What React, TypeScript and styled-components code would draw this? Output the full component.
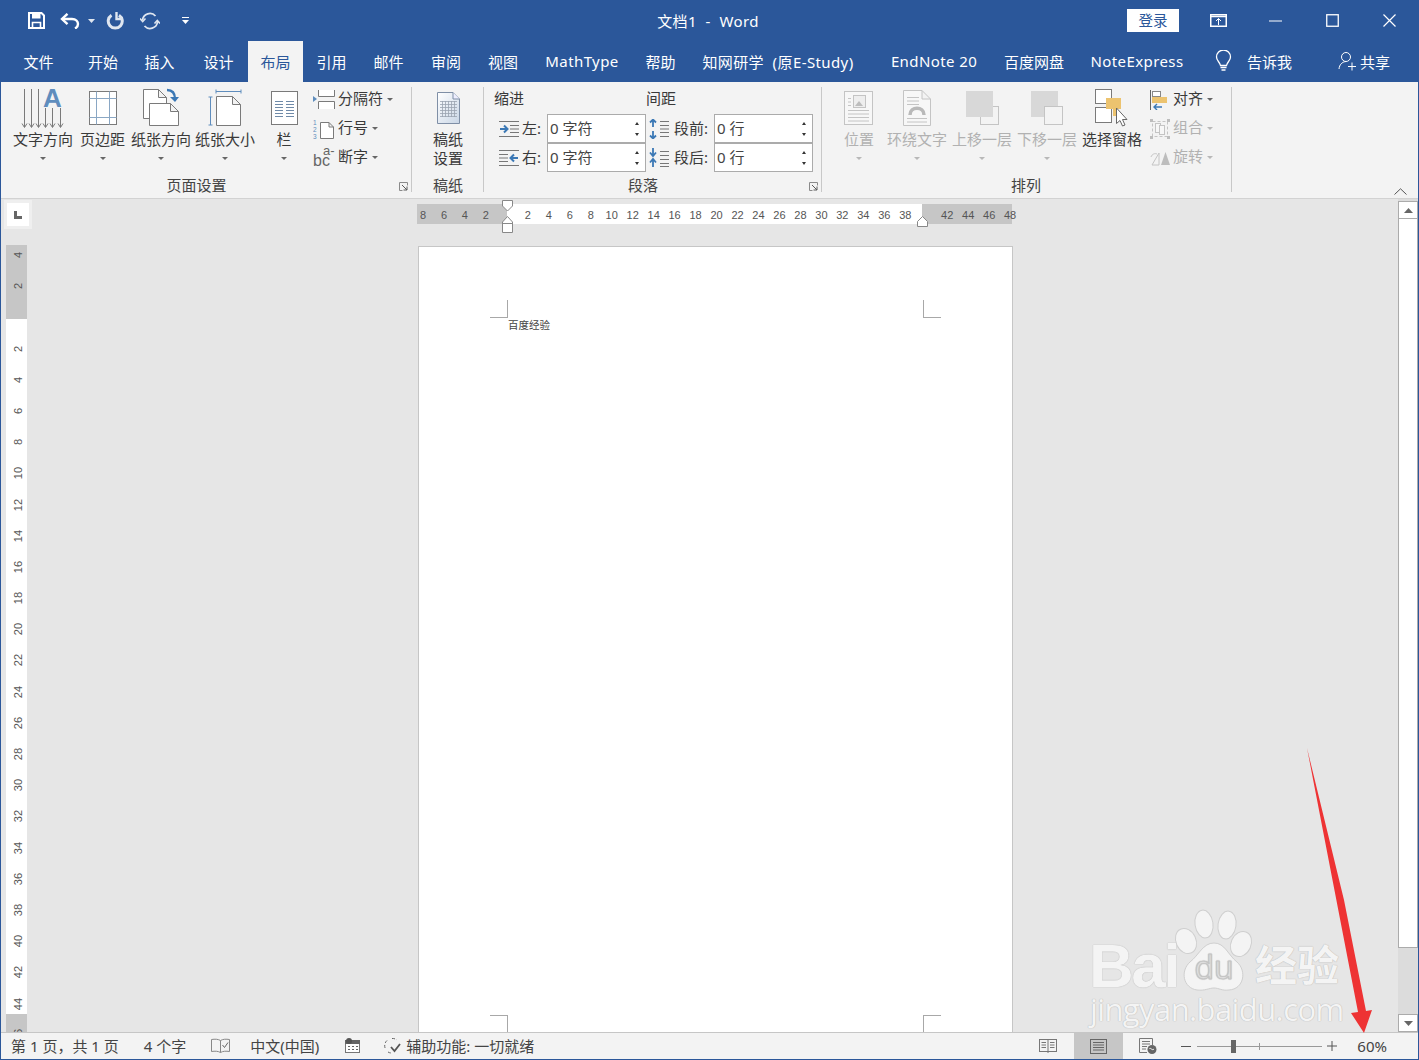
import React from "react";
import styled, { createGlobalStyle } from "styled-components";

const FONT = `"Noto Sans", "Noto Sans CJK SC", sans-serif`;
const BLUE = "#2b579a";

const Global = createGlobalStyle`
  html, body { margin: 0; padding: 0; background: #e6e6e6; overflow: hidden; }
  * { box-sizing: border-box; }
`;

const Win = styled.div`
  position: relative; width: 1419px; height: 1060px; overflow: hidden;
  display: flex; flex-direction: column; border: 1px solid ${BLUE}; border-top: 0;
  font-family: ${FONT}; color: #333; background: #e6e6e6;
`;
const TitleBar = styled.div`
  height: 41px; background: ${BLUE}; color: #fff; display: grid;
  grid-template-columns: 1fr auto 1fr; align-items: center;
`;
const Qat = styled.div`display: flex; align-items: center; padding-left: 25px;`;
const QatSlot = styled.span<{ $w: number; $ml?: number }>`
  width: ${p => p.$w}px; margin-left: ${p => p.$ml ?? 0}px; display: flex; justify-content: center; align-items: center;
`;
const DocTitle = styled.div`font-size: 15px; letter-spacing: 0.4px; white-space: pre; padding: 0 3px 1px 0;`;
const WinControls = styled.div`display: flex; justify-content: flex-end; align-items: center;`;
const Login = styled.button`
  width: 52px; height: 23px; border: 0; padding: 0 0 2px; background: #fff; color: #2b579a; margin-right: 11px;
  font: 14.5px ${FONT}; display: flex; align-items: center; justify-content: center;
`;
const WinBtn = styled.span`width: 57px; height: 41px; display: flex; align-items: center; justify-content: center;`;

const TabBar = styled.div`height: 41px; background: ${BLUE}; display: flex; margin-right: -1px;`;
const Tab = styled.div<{ $w: number; $active?: boolean; $latin?: boolean }>`
  width: ${p => p.$w}px; flex: none; display: flex; align-items: center; justify-content: center; padding-bottom: 1px;
  font-size: 15px; white-space: pre; letter-spacing: ${p => (p.$latin ? 0.4 : 0)}px; color: ${p => (p.$active ? "#2b579a" : "#fff")};
  background: ${p => (p.$active ? "#f3f3f3" : "transparent")};
`;
const Tell = styled.div`margin-left: 9px; display: flex; align-items: center; color: #fff; font-size: 15px; gap: 15px; padding-bottom: 1px;`;
const Share = styled.div`margin-left: 46px; display: flex; align-items: center; color: #fff; font-size: 15px; gap: 2px; padding-bottom: 1px;`;

const Ribbon = styled.div`height: 117px; background: #f3f3f3; border-bottom: 1px solid #d2d2d2; display: flex; font-size: 15px;`;
const Group = styled.div<{ $w: number }>`
  position: relative; width: ${p => p.$w}px; flex: none; display: flex; flex-direction: column;
  &::after { content: ""; position: absolute; right: 0; top: 5px; bottom: 6px; width: 1px; background: #c8c8c8; }
`;
const GroupBody = styled.div<{ $pad?: number }>`height: 91px; padding: 3px 0 0 ${p => p.$pad ?? 0}px; display: flex;`;
const GroupLabel = styled.div<{ $shift?: number }>`
  height: 20px; display: flex; align-items: center; justify-content: center; font-size: 15px; color: #444;
  padding: 2px ${p => p.$shift ?? 0}px 0 0;
`;
const Launcher = styled.span`position: absolute; right: 4px; bottom: 7px; display: flex;`;
const BigBtn = styled.div<{ $w: number; $off?: boolean }>`
  width: ${p => p.$w}px; flex: none; display: flex; flex-direction: column; align-items: center; white-space: nowrap;
  color: ${p => (p.$off ? "#b1b1b1" : "#3a3a3a")};
`;
const BigIcon = styled.div`height: 45px; display: flex; align-items: center; justify-content: center;`;
const BigLabel = styled.div`height: 19px; line-height: 19px; font-size: 15px; margin: 0 -4px;`;
const CaretLine = styled.div`height: 19px; display: flex; align-items: center; justify-content: center;`;
const Caret = styled.i<{ $off?: boolean }>`
  display: inline-block; width: 0; height: 0; border: 3px solid transparent; border-bottom: 0;
  border-top: 3px solid ${p => (p.$off ? "#b8b8b8" : "#666")};
`;
const SmallCol = styled.div<{ $ml: number }>`margin-left: ${p => p.$ml}px; display: flex; flex-direction: column;`;
const SmallBtn = styled.div<{ $off?: boolean }>`
  height: 29px; display: flex; align-items: center; white-space: nowrap;
  color: ${p => (p.$off ? "#b1b1b1" : "#3a3a3a")};
`;
const SmallText = styled.span`padding-bottom: 3px; line-height: 20px;`;
const SmallIcon = styled.span<{ $w?: number }>`width: ${p => p.$w ?? 25}px; height: 24px; display: flex; align-items: center; justify-content: flex-start;`;
const SmallCaret = styled(Caret)`margin-left: 4px;`;

const ParaGrid = styled.div`
  display: grid; grid-template-columns: 53px 99px 68px 99px; grid-auto-rows: 29px; align-items: center; color: #3a3a3a;
`;
const ParaHead = styled.div`font-size: 15px; padding-bottom: 3px; line-height: 20px;`;
const ParaHeadWide = styled(ParaHead)`grid-column: span 2;`;
const ParaLabel = styled.div<{ $pad: number; $gap: number }>`
  display: flex; align-items: center; gap: ${p => p.$gap}px; padding-left: ${p => p.$pad}px; font-size: 15px; white-space: nowrap;
`;
const ParaText = styled.span`padding-bottom: 2px; line-height: 20px;`;
const SpinBox = styled.div`
  height: 29px; border: 1px solid #ababab; background: #fff; display: flex; align-items: center; justify-content: space-between;
  padding: 0 6px 0 2px; font-size: 15px; color: #444;
`;
const SpinArrows = styled.span`display: flex; flex-direction: column; gap: 8px;`;
const SpinUp = styled.i`display: block; width: 0; height: 0; border: 2.5px solid transparent; border-top: 0; border-bottom: 3px solid #333;`;
const SpinDown = styled.i`display: block; width: 0; height: 0; border: 2.5px solid transparent; border-bottom: 0; border-top: 3px solid #333;`;
const Collapse = styled.div`flex: 1; display: flex; justify-content: flex-end; align-items: flex-end; padding: 0 11px 3px 0;`;

const Body = styled.div`flex: 1; min-height: 0; display: flex; background: #e6e6e6;`;
const LeftCol = styled.div`width: 31px; flex: none; display: flex; flex-direction: column; padding-left: 5px;`;
const Corner = styled.div`
  margin: 1px 0 0 -2px; width: 28px; height: 29px; background: #fff; border: 3px solid #efefef; display: flex; align-items: center; justify-content: center;
`;
const VRuler = styled.div`
  margin-top: 16px; width: 21px; flex: 1; overflow: hidden; display: flex; flex-direction: column;
  background: linear-gradient(#c6c6c6 0 74px, #fff 74px 769px, #c6c6c6 769px);
`;
const VTick = styled.span`
  height: 31.19px; flex: none; display: flex; align-items: center; justify-content: center; padding-left: 3px;
  font: 11px "Liberation Sans", sans-serif; color: #555;
  & > b { font-weight: 400; transform: rotate(-90deg); display: block; }
`;
const VSpacer = styled.div`height: 0; margin-top: -5.6px; flex: none;`;
const Main = styled.div`flex: 1; min-width: 0; display: flex; flex-direction: column; padding-left: 386px; position: relative;`;
const HRuler = styled.div`
  margin: 5px 0 0 -1px; width: 595px; height: 20px; padding-top: 1px; flex: none; display: flex; align-items: center;
  background: linear-gradient(90deg, #c6c6c6 0 90px, #fff 90px 505px, #c6c6c6 505px);
`;
const HTick = styled.span`
  width: 20.97px; flex: none; text-align: center; font: 11px "Liberation Sans", sans-serif; color: #555; white-space: nowrap;
`;
const HSpacer = styled.span`margin-left: -4.5px;`;
const Marker = styled.svg<{ $x: number; $y: number }>`position: absolute; left: ${p => p.$x}px; top: ${p => p.$y}px;`;
const Page = styled.div`
  position: relative; margin: 22px 0 0 0; width: 595px; flex: 1; background: #fff; border: 1px solid #c6c6c6; border-bottom: 0;
  padding: 71px 0 0 89px; font-size: 10.5px; color: #444; line-height: 14px;
`;
const Crop = styled.span<{ $x: number; $y: number; $r?: boolean; $b?: boolean }>`
  position: absolute; left: ${p => p.$x}px; top: ${p => p.$y}px; width: 18px; height: 18px;
  ${p => (p.$b ? "border-top" : "border-bottom")}: 1px solid #a8a8a8;
  ${p => (p.$r ? "border-left" : "border-right")}: 1px solid #a8a8a8;
`;
const Scroll = styled.div`width: 20px; flex: none; padding-top: 2px; display: flex; flex-direction: column; background: #dcdcdc;`;
const ScrollBtn = styled.div`height: 18px; flex: none; background: #fff; border: 1px solid #ababab; display: flex; align-items: center; justify-content: center;`;
const ScrollThumb = styled.div`height: 729px; flex: none; background: #fff; border: 1px solid #ababab; border-top: 0;`;
const ScrollFill = styled.div`flex: 1;`;

const Status = styled.div`
  height: 27px; flex: none; background: #f3f3f3; border-top: 1px solid #c6c6c6; display: flex; align-items: center;
  font-size: 15px; color: #444; white-space: pre; position: relative;
`;
const StatusItem = styled.span<{ $ml: number }>`margin-left: ${p => p.$ml}px; display: flex; align-items: center; padding-bottom: 1px;`;
const ViewBtn = styled.span<{ $on?: boolean; $pr?: number }>`
  width: 49px; height: 26px; padding-right: ${p => p.$pr ?? 0}px; display: flex; align-items: center; justify-content: center;
  background: ${p => (p.$on ? "#c6c6c6" : "transparent")};
`;
const StatusRight = styled.div`margin-left: auto; display: flex; align-items: center; padding-right: 31px;`;
const Slider = styled.span`position: relative; width: 125px; height: 1px; background: #999; margin: 0 5px 0 6px; display: block;`;
const SliderThumb = styled.i`position: absolute; left: 34px; top: -6px; width: 5px; height: 13px; background: #666;`;
const SliderMid = styled.i`position: absolute; left: 62px; top: -3px; width: 1px; height: 7px; background: #999;`;
const ZoomMinus = styled.svg`margin-left: 9px;`;

const Watermark = styled.div`
  position: absolute; left: 1085px; top: 905px; width: 270px; height: 128px; pointer-events: none; color: #f4f4f4;
  text-shadow: 0 0 1px #b5b5b5, 0 0 1px #c0c0c0;
`;
const Bai = styled.span`position: absolute; left: 3px; top: 36px; font: 700 62px/50px "Liberation Sans", sans-serif; letter-spacing: -2.5px;`;
const Jing = styled.span`position: absolute; left: 169px; top: 36px; font: 700 42px/44px "Noto Sans CJK SC", sans-serif;`;
const Url = styled.span`position: absolute; left: 4px; top: 86px; font: 400 31px/36px "Open Sans", sans-serif; letter-spacing: -0.6px; white-space: nowrap;`;
const Paw = styled.svg`position: absolute; left: 86px; top: 2px;`;
const Arrow = styled.svg`position: absolute; left: 1300px; top: 745px; pointer-events: none;`;

const G = "#7a7a7a", B2 = "#5f8dbd", D = "#c4c4c4";

const Fold = ({ x, y, w, h, c = G, f = "#fff" }: any) => (
  <path d={`M${x} ${y}H${x + w - 8}L${x + w} ${y + 8}V${y + h}H${x}Z M${x + w - 8} ${y}V${y + 8}H${x + w}`} fill={f} stroke={c} />
);
const Lines = ({ x, y, w, n, step = 4, c = G }: any) => (
  <path d={Array.from({ length: n }, (_, i) => `M${x} ${y + i * step + 0.5}h${w}`).join("")} stroke={c} fill="none" />
);

const IconTextDir = () => (
  <svg width="44" height="44" viewBox="0 0 44 44">
    <text x="22" y="21" fontFamily="Liberation Sans" fontWeight="700" fontSize="26" fill={B2}>A</text>
    {[3.5, 10.5, 17.5, 24.5, 31.5, 39.5].map((x, i) => (
      <path key={x} d={`M${x} ${i < 3 ? 3 : 22}V41M${x - 2.5} 37.5L${x} 41.5L${x + 2.5} 37.5`} stroke={G} fill="none" />
    ))}
  </svg>
);
const IconMargins = () => (
  <svg width="28" height="34" viewBox="0 0 28 34">
    <rect x=".5" y=".5" width="27" height="33" fill="#fff" stroke={G} />
    <path d="M.5 7.5H27.5M.5 26.5H27.5M7.5 .5V33.5M20.5 .5V33.5" stroke="#8aa7c4" fill="none" />
  </svg>
);
const IconOrient = () => (
  <svg width="38" height="40" viewBox="0 0 38 40">
    <Fold x={1.5} y={1.5} w={23} h={29} />
    <Fold x={7.5} y={15.5} w={29} h={22} />
    <path d="M25 2c5 0 8 3 8 9" stroke="#3b78b5" strokeWidth="2.4" fill="none" />
    <path d="M28 9l5 5 4-5z" fill="#3b78b5" />
  </svg>
);
const IconSize = () => (
  <svg width="34" height="38" viewBox="0 0 34 38">
    <path d="M8 2.5H33M8 .5v4M33 .5v4M2.5 8V36M.5 8h4M.5 36h4" stroke={B2} fill="none" />
    <Fold x={8.5} y={7.5} w={24} h={29} />
  </svg>
);
const IconCols = () => (
  <svg width="27" height="34" viewBox="0 0 27 34">
    <rect x=".5" y=".5" width="26" height="33" fill="#fff" stroke={G} />
    <Lines x={4} y={10} w={8} n={6} step={3} c="#6f8aa8" />
    <Lines x={15} y={10} w={8} n={6} step={3} c="#6f8aa8" />
  </svg>
);
const IconBreak = () => (
  <svg width="22" height="20" viewBox="0 0 22 20">
    <path d="M5.5 0V6.5H21.5V0M5.5 19V11.5H21.5V19" stroke={G} fill="#fff" />
    <path d="M0 6l4 3-4 3z" fill={B2} />
  </svg>
);
const IconLineNo = () => (
  <svg width="22" height="22" viewBox="0 0 22 22">
    <text x="0" y="7" fontSize="6.5" fontFamily="Liberation Sans" fill={B2}>1</text>
    <text x="0" y="14" fontSize="6.5" fontFamily="Liberation Sans" fill={B2}>2</text>
    <text x="0" y="21" fontSize="6.5" fontFamily="Liberation Sans" fill={B2}>3</text>
    <path d="M7.5 4.5H16L20.5 9V20.5H7.5ZM16 4.5V9H20.5" fill="#fff" stroke={G} />
  </svg>
);
const IconHyph = () => (
  <svg width="22" height="24" viewBox="0 0 22 24">
    <text x="0" y="20" fontSize="16" fontFamily="Liberation Sans" fill="#666">bc</text>
    <text x="10" y="9" fontSize="13" fontFamily="Liberation Sans" fill="#666">a-</text>
  </svg>
);
const IconPaper = () => (
  <svg width="25" height="32" viewBox="0 0 25 32">
    <defs><linearGradient id="pg" x1="0" y1="0" x2="1" y2="1"><stop offset="0" stopColor="#fff" /><stop offset="1" stopColor="#c9d6e6" /></linearGradient></defs>
    <path d="M1.5 .5H17L23.5 7V31.5H1.5Z" fill="url(#pg)" stroke="#7f8fa6" />
    <path d="M17 .5V7H23.5" fill="#eef" stroke="#7f8fa6" />
    <path d="M4 9.5H21M4 12.5H21M4 15.5H21M4 18.5H21M4 21.5H21M4 24.5H21M6.5 9V25M9.5 9V25M12.5 9V25M15.5 9V25M18.5 9V25" stroke="#9aa3b0" strokeWidth=".8" />
  </svg>
);
const IconPos = () => (
  <svg width="30" height="34" viewBox="0 0 30 34">
    <rect x=".5" y=".5" width="28" height="33" fill="#f7f7f7" stroke={D} />
    <rect x="9.5" y="4.5" width="12" height="12" fill="#eee" stroke={D} />
    <path d="M11 15l4-5 4 5z" fill="#bdbdbd" />
    <Lines x={4} y={19} w={21} n={4} step={3.5} c={D} />
    <Lines x={4} y={7} w={3} n={3} step={3.5} c={D} />
  </svg>
);
const IconWrap = () => (
  <svg width="28" height="36" viewBox="0 0 28 36">
    <path d="M.5 .5H19L27.5 9V35.5H.5Z M19 .5V9H27.5" fill="#f7f7f7" stroke={D} />
    <Lines x={4} y={7} w={12} n={3} step={3.5} c={D} />
    <path d="M7 25c0-9 14-9 14 0" stroke="#b9b9b9" strokeWidth="3.5" fill="none" />
    <Lines x={4} y={28} w={20} n={2} step={3.5} c={D} />
  </svg>
);
const IconUp = () => (
  <svg width="33" height="34" viewBox="0 0 33 34">
    <rect x="14.5" y="15.5" width="18" height="18" fill="none" stroke={D} />
    <rect x="0" y="0" width="27" height="26" fill="#d8d8d8" />
  </svg>
);
const IconDown = () => (
  <svg width="33" height="34" viewBox="0 0 33 34">
    <rect x="0" y="0" width="27" height="26" fill="#d8d8d8" />
    <rect x="13.5" y="15.5" width="18" height="18" fill="#f3f3f3" stroke={D} />
  </svg>
);
const IconPane = () => (
  <svg width="34" height="38" viewBox="0 0 34 38">
    <rect x=".5" y=".5" width="16" height="14" fill="#fff" stroke={G} />
    <rect x=".5" y="18.5" width="16" height="15" fill="#fff" stroke={G} />
    <path d="M11 9H26V20H21V27H18V20H11Z" fill="#ecc36f" />
    <path d="M21.5 19V34.5L25 31.5L27.5 37L30 36L27.5 30.5H32Z" fill="#fff" stroke="#666" />
  </svg>
);
const IconAlign = () => (
  <svg width="20" height="20" viewBox="0 0 20 20">
    <path d="M.5 0V20" stroke="#666" />
    <rect x="2.5" y="1.5" width="8" height="5" fill="#fff" stroke="#888" />
    <rect x="2" y="7" width="15" height="6" fill="#ecc36f" />
    <path d="M12 17H4M7 14l-3 3 3 3" stroke="#3b78b5" strokeWidth="1.4" fill="none" />
  </svg>
);
const IconGroup = () => (
  <svg width="20" height="20" viewBox="0 0 20 20">
    <rect x="2.5" y="2.5" width="15" height="15" fill="none" stroke={D} strokeDasharray="3 2" />
    <rect x="5.5" y="4.5" width="5" height="9" fill="#f7f7f7" stroke={D} />
    <rect x="9.5" y="6.5" width="5" height="9" fill="#f7f7f7" stroke={D} />
    <path d="M0 0h3v3H0zM17 0h3v3h-3zM0 17h3v3H0zM17 17h3v3h-3z" fill="#bdbdbd" />
  </svg>
);
const IconRotate = () => (
  <svg width="20" height="16" viewBox="0 0 20 16">
    <path d="M11 15H20L15.5 2Z" fill="#bdbdbd" />
    <path d="M2 15L9 3V15Z" fill="none" stroke={D} />
    <path d="M1 7c1-3 4-4 6-3" stroke={D} fill="none" />
  </svg>
);
const IconIndentL = () => (
  <svg width="20" height="16" viewBox="0 0 20 16">
    <path d="M0 .5H20M11 4.5H20M11 8H20M11 11.5H20M0 15.5H20" stroke="#777" fill="none" />
    <path d="M1 8H8M5 4.5L8.5 8L5 11.5" stroke="#3b78b5" strokeWidth="2" fill="none" />
  </svg>
);
const IconIndentR = () => (
  <svg width="20" height="16" viewBox="0 0 20 16">
    <path d="M0 .5H20M0 4.5H9M0 8H9M0 11.5H9M0 15.5H20" stroke="#777" fill="none" />
    <path d="M19 8H12M15 4.5L11.5 8L15 11.5" stroke="#3b78b5" strokeWidth="2" fill="none" />
  </svg>
);
const IconSpaceB = ({ flip }: { flip?: boolean }) => (
  <svg width="20" height="20" viewBox="0 0 20 20">
    <path d={flip ? "M11 3.5H20M11 7.5H20M11 11.5H20M11 15.5H20M11 18.5H20" : "M11 2.5H20M11 6.5H20M11 10H20M11 13.5H20M11 17.5H20"} stroke="#777" fill="none" />
    {flip ? (
      <path d="M4 0V7M1 4.5L4 8L7 4.5M4 19V12M1 14.5L4 11L7 14.5" stroke="#3b78b5" strokeWidth="1.8" fill="none" />
    ) : (
      <path d="M4 8V1M1 3.5L4 0.5L7 3.5M4 12V19M1 16.5L4 19.5L7 16.5" stroke="#3b78b5" strokeWidth="1.8" fill="none" />
    )}
  </svg>
);
const IconLaunch = () => (
  <svg width="9" height="9" viewBox="0 0 9 9">
    <path d="M8.5 3.5V.5H.5V8.5H3.5" stroke="#8a8a8a" fill="none" />
    <path d="M3 3L8 8M8 4.5V8H4.5" stroke="#5a5a5a" fill="none" />
  </svg>
);

const tabs: [string, number, boolean?][] = [
  ["文件", 75], ["开始", 54], ["插入", 59], ["设计", 59], ["布局", 55], ["引用", 57], ["邮件", 57], ["审阅", 58], ["视图", 56],
  ["MathType", 102, true], ["帮助", 55], ["知网研学  (原E-Study)", 180, true], ["EndNote 20", 132, true], ["百度网盘", 68], ["NoteExpress", 138, true],
];
const Big = ({ w, icon, label, off }: { w: number; icon: React.ReactNode; label: string; off?: boolean }) => (
  <BigBtn $w={w} $off={off}>
    <BigIcon>{icon}</BigIcon>
    <BigLabel>{label}</BigLabel>
    <CaretLine><Caret $off={off} /></CaretLine>
  </BigBtn>
);
const Small = ({ icon, label, off, iw }: { icon: React.ReactNode; label: string; off?: boolean; iw?: number }) => (
  <SmallBtn $off={off}>
    <SmallIcon $w={iw}>{icon}</SmallIcon><SmallText>{label}</SmallText><SmallCaret $off={off} />
  </SmallBtn>
);
const Spin = ({ v }: { v: string }) => (
  <SpinBox><ParaText>{v}</ParaText><SpinArrows><SpinUp /><SpinDown /></SpinArrows></SpinBox>
);
const hNums = ["8", "6", "4", "2", "", ...Array.from({ length: 19 }, (_, i) => String((i + 1) * 2)), "", "42", "44", "46", "48"];
const vNums = ["4", "2", "", ...Array.from({ length: 23 }, (_, i) => String((i + 1) * 2))];

export default function App() {
  return (
    <Win>
      <Global />
      <TitleBar>
        <Qat>
          <QatSlot $w={20}>
            <svg width="17" height="17" viewBox="0 0 17 17"><path d="M1 1H13.5L16 3.5V16H1Z" fill="none" stroke="#fff" strokeWidth="2" /><path d="M4 1.5H12.5V6.5H4Z" fill="#fff" /><path d="M4.5 16V10.5H12.5V16" fill="none" stroke="#fff" strokeWidth="1.6" /></svg>
          </QatSlot>
          <QatSlot $w={28} $ml={10}>
            <svg width="20" height="16" viewBox="0 0 20 16"><path d="M2 6H12C16 6 18 8.5 18 11C18 13 17 14.5 15 15.5" fill="none" stroke="#fff" strokeWidth="2.4" /><path d="M7.5 .8L2 6L7.5 11.2" fill="none" stroke="#fff" strokeWidth="2.4" /></svg>
          </QatSlot>
          <QatSlot $w={14}><svg width="7" height="4" viewBox="0 0 7 4"><path d="M0 0H7L3.5 4Z" fill="#dfe6f0" /></svg></QatSlot>
          <QatSlot $w={34}>
            <svg width="18" height="18" viewBox="0 0 18 18"><path d="M5.5 3.2A7 7 0 1 0 13 3.2" fill="none" stroke="#dfe6f0" strokeWidth="3" /><path d="M10.5 0V7H17" fill="none" stroke="#dfe6f0" strokeWidth="2.4" /></svg>
          </QatSlot>
          <QatSlot $w={36}>
            <svg width="20" height="18" viewBox="0 0 20 18"><path d="M2.5 8A7.5 7.5 0 0 1 15.5 4M17.5 10A7.5 7.5 0 0 1 4.5 14" fill="none" stroke="#dfe6f0" strokeWidth="1.8" /><path d="M0 6.5L2.7 9.5L5.5 6.5M14.5 11.5L17.3 8.5L20 11.5" fill="none" stroke="#dfe6f0" strokeWidth="1.6" /></svg>
          </QatSlot>
          <QatSlot $w={34}>
            <svg width="7" height="7" viewBox="0 0 7 7"><path d="M0 .5H7" stroke="#fff" /><path d="M0 3H7L3.5 7Z" fill="#fff" /></svg>
          </QatSlot>
        </Qat>
        <DocTitle>文档1  -  Word</DocTitle>
        <WinControls>
          <Login>登录</Login>
          <WinBtn><svg width="17" height="13" viewBox="0 0 17 13"><rect x=".75" y=".75" width="15.5" height="11.5" fill="none" stroke="#fff" strokeWidth="1.5" /><path d="M1 2.5H16" stroke="#fff" strokeWidth="1.5" /><path d="M8.5 4.5V11M6 7L8.5 4.5L11 7" fill="none" stroke="#fff" /></svg></WinBtn>
          <WinBtn><svg width="13" height="2" viewBox="0 0 13 2"><path d="M0 1H13" stroke="#fff" /></svg></WinBtn>
          <WinBtn><svg width="13" height="13" viewBox="0 0 13 13"><rect x=".75" y=".75" width="11.5" height="11.5" fill="none" stroke="#fff" strokeWidth="1.3" /></svg></WinBtn>
          <WinBtn><svg width="13" height="13" viewBox="0 0 13 13"><path d="M.5 .5L12.5 12.5M12.5 .5L.5 12.5" stroke="#fff" strokeWidth="1.2" /></svg></WinBtn>
        </WinControls>
      </TitleBar>
      <TabBar>
        {tabs.map(([t, w, l]) => <Tab key={t} $w={w} $latin={l} $active={t === "布局"}>{t}</Tab>)}
        <Tell>
          <svg width="17" height="22" viewBox="0 0 17 22"><path d="M5.5 15.5C5 12 1.5 11 1.5 7A7 7 0 0 1 15.500 7C15.500 11 12 12 11.500 15.500Z" fill="none" stroke="#fff" strokeWidth="1.3" /><path d="M5.500 17.500H11.500M6.500 20H10.500" stroke="#fff" strokeWidth="1.5" /></svg>
          告诉我
        </Tell>
        <Share>
          <svg width="20" height="20" viewBox="0 0 20 20"><circle cx="8" cy="6" r="4.5" fill="none" stroke="#fff" /><path d="M1 18C1.500 13.500 4 11 8 10.500" fill="none" stroke="#fff" /><path d="M10 15.500H18M14 11.500V19.500" stroke="#fff" /></svg>
          共享
        </Share>
      </TabBar>
      <Ribbon>
        <Group $w={411}>
          <GroupBody $pad={11}>
            <Big w={62} icon={<IconTextDir />} label="文字方向" />
            <Big w={57} icon={<IconMargins />} label="页边距" />
            <Big w={60} icon={<IconOrient />} label="纸张方向" />
            <Big w={68} icon={<IconSize />} label="纸张大小" />
            <Big w={50} icon={<IconCols />} label="栏" />
            <SmallCol $ml={4}>
              <Small icon={<IconBreak />} label="分隔符" />
              <Small icon={<IconLineNo />} label="行号" />
              <Small icon={<IconHyph />} label="断字" />
            </SmallCol>
          </GroupBody>
          <GroupLabel $shift={20}>页面设置</GroupLabel>
          <Launcher><IconLaunch /></Launcher>
        </Group>
        <Group $w={72}>
          <GroupBody>
            <BigBtn $w={72}>
              <BigIcon><IconPaper /></BigIcon>
              <BigLabel>稿纸</BigLabel>
              <BigLabel>设置</BigLabel>
            </BigBtn>
          </GroupBody>
          <GroupLabel>稿纸</GroupLabel>
        </Group>
        <Group $w={338}>
          <GroupBody $pad={10}>
            <ParaGrid>
              <ParaHeadWide>缩进</ParaHeadWide>
              <ParaHeadWide>间距</ParaHeadWide>
              <ParaLabel $pad={5} $gap={3}><IconIndentL /><ParaText>左:</ParaText></ParaLabel>
              <Spin v="0 字符" />
              <ParaLabel $pad={3} $gap={5}><IconSpaceB /><ParaText>段前:</ParaText></ParaLabel>
              <Spin v="0 行" />
              <ParaLabel $pad={5} $gap={3}><IconIndentR /><ParaText>右:</ParaText></ParaLabel>
              <Spin v="0 字符" />
              <ParaLabel $pad={3} $gap={5}><IconSpaceB flip /><ParaText>段后:</ParaText></ParaLabel>
              <Spin v="0 行" />
            </ParaGrid>
          </GroupBody>
          <GroupLabel $shift={20}>段落</GroupLabel>
          <Launcher><IconLaunch /></Launcher>
        </Group>
        <Group $w={410}>
          <GroupBody $pad={7}>
            <Big w={60} icon={<IconPos />} label="位置" off />
            <Big w={56} icon={<IconWrap />} label="环绕文字" off />
            <Big w={74} icon={<IconUp />} label="上移一层" off />
            <Big w={56} icon={<IconDown />} label="下移一层" off />
            <BigBtn $w={74}>
              <BigIcon><IconPane /></BigIcon>
              <BigLabel>选择窗格</BigLabel>
            </BigBtn>
            <SmallCol $ml={1}>
              <Small iw={23} icon={<IconAlign />} label="对齐" />
              <Small iw={23} icon={<IconGroup />} label="组合" off />
              <Small iw={23} icon={<IconRotate />} label="旋转" off />
            </SmallCol>
          </GroupBody>
          <GroupLabel $shift={2}>排列</GroupLabel>
        </Group>
        <Collapse>
          <svg width="13" height="7" viewBox="0 0 13 7"><path d="M.5 6.500L6.500 .8L12.500 6.500" fill="none" stroke="#555" /></svg>
        </Collapse>
      </Ribbon>
      <Body>
        <LeftCol>
          <Corner>
            <svg width="8" height="8" viewBox="0 0 8 8"><path d="M0 0H3V5H8V8H0Z" fill="#666" /></svg>
          </Corner>
          <VRuler>
            <VSpacer />
            {vNums.map((n, i) => <VTick key={i}><b>{n}</b></VTick>)}
          </VRuler>
        </LeftCol>
        <Main>
          <HRuler>
            <HSpacer />
            {hNums.map((n, i) => <HTick key={i}>{n}</HTick>)}
          </HRuler>
          <Marker $x={470} $y={1} width="12" height="12" viewBox="0 0 12 12"><path d="M.5 .5H10.500V6L5.500 11L.5 6Z" fill="#fff" stroke="#888" /></Marker>
          <Marker $x={470} $y={17} width="12" height="17" viewBox="0 0 12 17"><path d="M5.500 .5L10.500 6V16.500H.5V6Z M.5 7.500H10.500" fill="#fff" stroke="#888" /></Marker>
          <Marker $x={885} $y={17} width="12" height="11" viewBox="0 0 12 11"><path d="M5.500 .5L10.500 5.500V10.500H.5V5.500Z" fill="#fff" stroke="#888" /></Marker>
          <Page>
            百度经验
            <Crop $x={71} $y={53} />
            <Crop $x={504} $y={53} $r />
            <Crop $x={71} $y={768} $b />
            <Crop $x={504} $y={768} $r $b />
          </Page>
        </Main>
        <Scroll>
          <ScrollBtn><svg width="9" height="5" viewBox="0 0 9 5"><path d="M0 5L4.500 0L9 5Z" fill="#666" /></svg></ScrollBtn>
          <ScrollThumb />
          <ScrollFill />
          <ScrollBtn><svg width="9" height="5" viewBox="0 0 9 5"><path d="M0 0L4.500 5L9 0Z" fill="#666" /></svg></ScrollBtn>
        </Scroll>
      </Body>
      <Status>
        <StatusItem $ml={10}>第 1 页，共 1 页</StatusItem>
        <StatusItem $ml={25}>4 个字</StatusItem>
        <StatusItem $ml={25}>
          <svg width="19" height="16" viewBox="0 0 19 16"><path d="M9.500 2.500C7 1 4 1 .5 1.500V13.500C4 13 7 13 9.500 14.500V2.500C12 1 15 1 18.500 1.500V13.500C15 13 12 13 9.500 14.500" fill="none" stroke="#888" /><path d="M11.500 7L13.500 9.500L17 4.500" fill="none" stroke="#666" /></svg>
        </StatusItem>
        <StatusItem $ml={20}>中文(中国)</StatusItem>
        <StatusItem $ml={26}>
          <svg width="15" height="15" viewBox="0 0 15 15"><rect x=".5" y="2.500" width="14" height="12" fill="#fff" stroke="#777" /><rect x="0" y="2" width="15" height="4" fill="#666" /><circle cx="4" cy="3" r="3" fill="#555" /><path d="M3 8.500h2M7 8.500h2M11 8.500h2M3 11.500h2M7 11.500h2M11 11.500h2" stroke="#666" /></svg>
        </StatusItem>
        <StatusItem $ml={23}>
          <svg width="20" height="18" viewBox="0 0 20 18"><path d="M4 3.500A7 7 0 0 0 2.500 12M5 15A7 7 0 0 0 8 16M9 1.500A7 7 0 0 1 14 3" fill="none" stroke="#666" strokeDasharray="3 2" /><path d="M8 10L11.500 14L17 7" fill="none" stroke="#555" strokeWidth="1.800" /></svg>
        </StatusItem>
        <StatusItem $ml={3}>辅助功能: 一切就绪</StatusItem>
        <StatusRight>
          <ViewBtn $pr={3}>
            <svg width="18" height="14" viewBox="0 0 18 14"><rect x=".5" y=".5" width="17" height="12" fill="none" stroke="#777" /><path d="M9 .5V14M2.500 3.500H7M2.500 6H7M2.500 8.500H7M11 3.500H15.500M11 6H15.500M11 8.500H15.500" stroke="#777" fill="none" /></svg>
          </ViewBtn>
          <ViewBtn $on>
            <svg width="17" height="15" viewBox="0 0 17 15"><rect x=".5" y=".5" width="16" height="14" fill="none" stroke="#666" /><path d="M3 3.500H14M3 6H14M3 8.500H14M3 11H14" stroke="#666" /></svg>
          </ViewBtn>
          <ViewBtn>
            <svg width="18" height="16" viewBox="0 0 18 16"><path d="M.5 .5H13.500V7M.5 .5V14.500H8" fill="none" stroke="#777" /><path d="M3 3.500H11M3 6H11M3 8.500H8M3 11H7" stroke="#777" /><circle cx="13" cy="11.500" r="4.500" fill="#666" /><path d="M10.500 10.500C12 9.500 13 13 15 11" stroke="#fff" fill="none" /></svg>
          </ViewBtn>
          <ZoomMinus width="10" height="9" viewBox="0 0 10 9"><path d="M0 4.500H10" stroke="#555" /></ZoomMinus>
          <Slider><SliderThumb /><SliderMid /></Slider>
          <svg width="10" height="10" viewBox="0 0 10 10"><path d="M0 5H10M5 0V10" stroke="#555" /></svg>
          <StatusItem $ml={20}>60%</StatusItem>
        </StatusRight>
      </Status>
      <Watermark>
        <Bai>Bai</Bai>
        <Paw width="84" height="86" viewBox="0 0 84 86">
          <g fill="#f4f4f4" stroke="#cfcfcf">
            <ellipse cx="14" cy="34" rx="10" ry="13" transform="rotate(-25 14 34)" />
            <ellipse cx="32" cy="17" rx="9" ry="14" transform="rotate(-8 32 17)" />
            <ellipse cx="55" cy="18" rx="9" ry="14" transform="rotate(8 55 18)" />
            <ellipse cx="69" cy="37" rx="10" ry="13" transform="rotate(25 69 37)" />
            <path d="M42 36C53 36 56 48 65 55C75 64 72 82 57 83C50 84 47 81 42 81C37 81 33 84 25 83C11 81 8 64 18 55C27 48 31 36 42 36Z" />
          </g>
          <text x="42" y="72" textAnchor="middle" fontFamily="Open Sans" fontSize="32" fill="#e6e6e6" stroke="#c8c8c8" strokeWidth=".6">du</text>
        </Paw>
        <Jing>经验</Jing>
        <Url>jingyan.baidu.com</Url>
      </Watermark>
      <Arrow width="80" height="295" viewBox="0 0 80 295">
        <path d="M6 3L43 155L65 266L71 265L63 288L50 268L57 267Z" fill="#ee3334" />
      </Arrow>
    </Win>
  );
}
